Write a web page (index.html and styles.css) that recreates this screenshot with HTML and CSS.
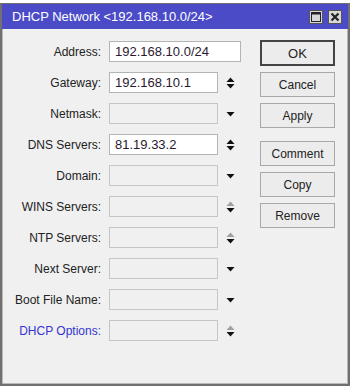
FILE: index.html
```html
<!DOCTYPE html>
<html lang="en">
<head>
    <meta charset="UTF-8">
    <title>DHCP Network</title>
    <link rel="stylesheet" href="styles.css">
</head>
<body>
    <div class="window">
        <div class="titlebar">
            <span class="title">DHCP Network &lt;192.168.10.0/24&gt;</span>
            <span class="tb-btn">
                <svg width="10" height="10" viewBox="0 0 10 10"><rect x="0.5" y="0.5" width="9" height="9" fill="none" stroke="#222" stroke-width="1"/><rect x="0.5" y="0.5" width="9" height="2" fill="#222"/></svg>
            </span>
            <span class="tb-btn">
                <svg width="10" height="10" viewBox="0 0 10 10"><path d="M1.5 1.5 L8.5 8.5 M8.5 1.5 L1.5 8.5" stroke="#222" stroke-width="2.2"/></svg>
            </span>
        </div>

        <div class="content">
            <div class="form">
                <label>Address:</label>
                <div class="field wide">192.168.10.0/24</div>

                <label>Gateway:</label>
                <div class="cell">
                    <div class="field">192.168.10.1</div>
                    <span class="arrow"><svg width="9" height="12" viewBox="0 0 9 12"><path d="M0.5 5 L4.5 0.5 L8.5 5 Z" fill="#111"/><path d="M0.5 7 L8.5 7 L4.5 11.5 Z" fill="#111"/></svg></span>
                </div>

                <label>Netmask:</label>
                <div class="cell">
                    <div class="field off"></div>
                    <span class="arrow"><svg width="9" height="12" viewBox="0 0 9 12"><path d="M0.5 4 L8.5 4 L4.5 8.5 Z" fill="#111"/></svg></span>
                </div>

                <label>DNS Servers:</label>
                <div class="cell">
                    <div class="field">81.19.33.2</div>
                    <span class="arrow"><svg width="9" height="12" viewBox="0 0 9 12"><path d="M0.5 5 L4.5 0.5 L8.5 5 Z" fill="#111"/><path d="M0.5 7 L8.5 7 L4.5 11.5 Z" fill="#111"/></svg></span>
                </div>

                <label>Domain:</label>
                <div class="cell">
                    <div class="field off"></div>
                    <span class="arrow"><svg width="9" height="12" viewBox="0 0 9 12"><path d="M0.5 4 L8.5 4 L4.5 8.5 Z" fill="#111"/></svg></span>
                </div>

                <label>WINS Servers:</label>
                <div class="cell">
                    <div class="field off"></div>
                    <span class="arrow"><svg width="9" height="12" viewBox="0 0 9 12"><path d="M0.5 5 L4.5 0.5 L8.5 5 Z" fill="#a0a0a0"/><path d="M0.5 7 L8.5 7 L4.5 11.5 Z" fill="#111"/></svg></span>
                </div>

                <label>NTP Servers:</label>
                <div class="cell">
                    <div class="field off"></div>
                    <span class="arrow"><svg width="9" height="12" viewBox="0 0 9 12"><path d="M0.5 5 L4.5 0.5 L8.5 5 Z" fill="#a0a0a0"/><path d="M0.5 7 L8.5 7 L4.5 11.5 Z" fill="#111"/></svg></span>
                </div>

                <label>Next Server:</label>
                <div class="cell">
                    <div class="field off"></div>
                    <span class="arrow"><svg width="9" height="12" viewBox="0 0 9 12"><path d="M0.5 4 L8.5 4 L4.5 8.5 Z" fill="#111"/></svg></span>
                </div>

                <label>Boot File Name:</label>
                <div class="cell">
                    <div class="field off"></div>
                    <span class="arrow"><svg width="9" height="12" viewBox="0 0 9 12"><path d="M0.5 4 L8.5 4 L4.5 8.5 Z" fill="#111"/></svg></span>
                </div>

                <label class="link">DHCP Options:</label>
                <div class="cell">
                    <div class="field off"></div>
                    <span class="arrow"><svg width="9" height="12" viewBox="0 0 9 12"><path d="M0.5 5 L4.5 0.5 L8.5 5 Z" fill="#a0a0a0"/><path d="M0.5 7 L8.5 7 L4.5 11.5 Z" fill="#111"/></svg></span>
                </div>
            </div>

            <div class="buttons">
                <button class="default">OK</button>
                <button>Cancel</button>
                <button>Apply</button>
                <button class="group">Comment</button>
                <button>Copy</button>
                <button>Remove</button>
            </div>
        </div>
    </div>
</body>
</html>
```

FILE: styles.css
```css
body {
    margin: 0;
    background: #fff;
    font-family: "Liberation Sans", Arial, sans-serif;
}

.window {
    margin-top: 3px;
    width: 346px;
    height: 380px;
    border: 1px solid #707070;
    border-width: 1px 2px 2px 2px;
    background: #f0f0f0;
    box-shadow: inset 1px 0 0 #b8b8b8, inset -1px -1px 0 #b8b8b8;
}

.titlebar {
    height: 25px;
    background: #4b4bc7;
    display: flex;
    align-items: center;
    padding: 0 6px 0 10px;
    gap: 5px;
}

.title {
    flex: 1;
    color: #fff;
    font-size: 13px;
}

.tb-btn {
    width: 14px;
    height: 14px;
    box-sizing: border-box;
    background: #d8d8d8;
    border: 1px solid #555;
    display: flex;
    align-items: center;
    justify-content: center;
    margin-top: 1px;
}

.content {
    display: flex;
    padding-top: 12px;
}

.form {
    display: grid;
    grid-template-columns: 99px 132px;
    column-gap: 8px;
    row-gap: 10px;
    align-items: center;
}

label {
    text-align: right;
    font-size: 12px;
    color: #222;
}

.link {
    color: #3434d0;
}

.cell {
    display: flex;
    align-items: center;
}

.field {
    width: 110px;
    height: 21px;
    box-sizing: border-box;
    border: 1px solid #b4b4b4;
    background: #fff;
    font-size: 13px;
    color: #2a1a30;
    padding: 2px 5px;
    line-height: 15px;
}

.field.wide {
    width: 132px;
}

.field.off {
    background: #f0f0f0;
    border-color: #c6c6c6;
}

.arrow {
    width: 22px;
    display: flex;
    justify-content: center;
    padding-left: 1px;
}

.buttons {
    display: flex;
    flex-direction: column;
    gap: 6px;
    margin-left: 19px;
    margin-top: -1px;
}

button {
    width: 75px;
    height: 25px;
    font-family: "Liberation Sans", Arial, sans-serif;
    font-size: 12px;
    color: #222;
    background: #ececec;
    border: 1px solid #a8a8a8;
    padding: 0;
}

button.default {
    border: 2px solid #444;
    height: 26px;
    font-size: 13px;
}

button.group {
    margin-top: 7px;
}
```
